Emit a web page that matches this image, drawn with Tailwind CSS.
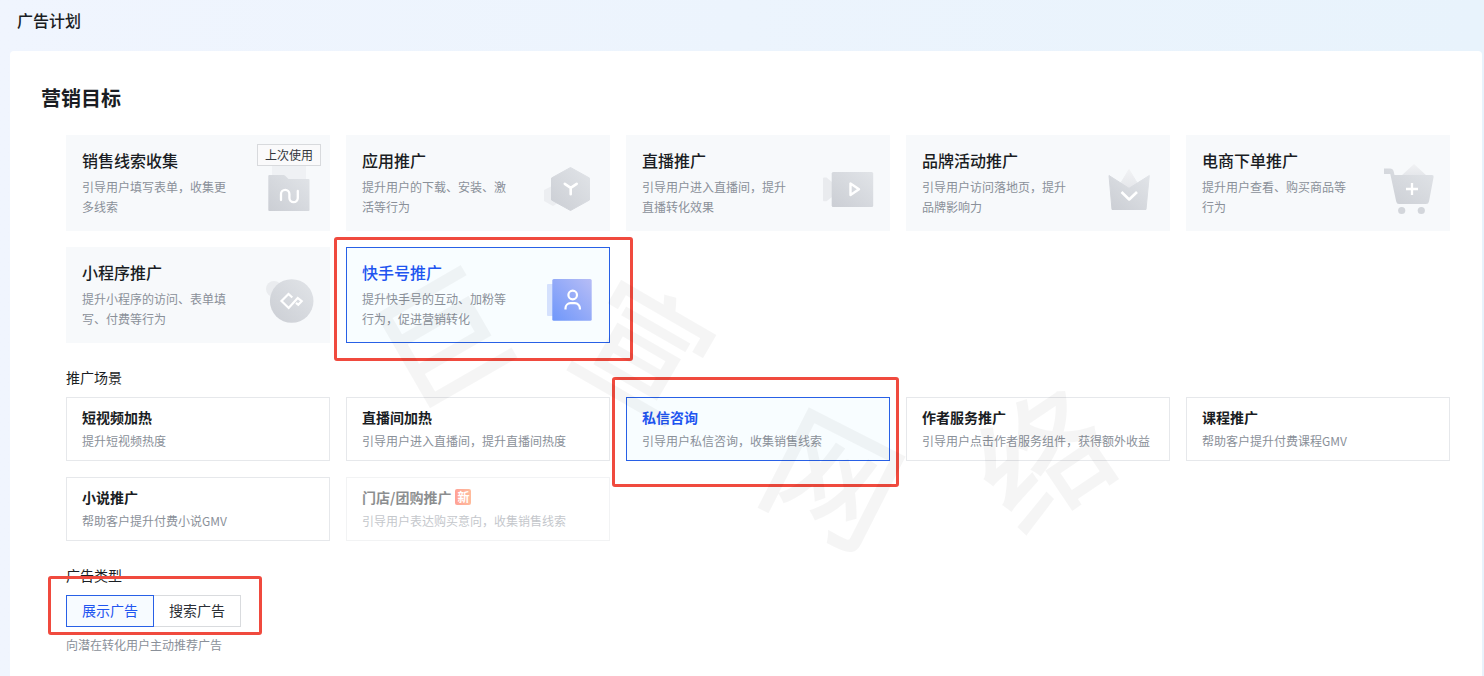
<!DOCTYPE html>
<html lang="zh-CN">
<head>
<meta charset="utf-8">
<meta name="viewport" content="width=device-width, initial-scale=1">
<title>广告计划</title>
<script src="https://cdn.jsdelivr.net/npm/@tailwindcss/browser@4"></script>
</head>
<body class="min-h-screen flex flex-col bg-linear-to-r from-[#f0f5fe] to-[#e8f3fc] font-['Noto_Sans_CJK_SC',sans-serif] text-[#1a1d23]">
<svg class="absolute size-0" aria-hidden="true">
  <defs>
    <linearGradient id="gray" x1="1" y1="0" x2="0" y2="1"><stop offset="0" stop-color="#e1e4e8"/><stop offset="1" stop-color="#cbced4"/></linearGradient>
    <linearGradient id="pale" x1="0" y1="0" x2="0" y2="1"><stop offset="0" stop-color="#f1f2f4"/><stop offset="1" stop-color="#e4e6ea"/></linearGradient>
    <linearGradient id="blue" x1="1" y1="0" x2="0" y2="1"><stop offset="0" stop-color="#b7bdf6"/><stop offset="1" stop-color="#6f97fa"/></linearGradient>
  </defs>
</svg>

<header class="h-[51px] flex items-center px-[17px] pb-3">
  <h1 class="text-base leading-6 font-medium">广告计划</h1>
</header>

<main class="relative flex-1 ml-2.5 mr-0.5 rounded-t bg-white pt-8 pr-8 pl-14 pb-5 overflow-hidden">
  <h2 class="-ml-[25px] text-xl leading-[30px] font-bold">营销目标</h2>

  <section aria-label="营销目标" class="mt-[22px] grid grid-cols-5 gap-4">
    <button type="button" class="relative flex justify-between items-start border border-[#f7f9fb] bg-[#f7f9fb] px-[15px] py-[13px] text-left">
      <span class="w-[148px]">
        <span class="block text-base leading-[22px] font-medium">销售线索收集</span>
        <span class="block mt-1.5 text-xs leading-5 text-[#8a9099]">引导用户填写表单，收集更多线索</span>
      </span>
      <svg class="mt-4 size-[50px] shrink-0 overflow-visible" viewBox="0 0 50 50" fill="none">
        <path d="M8 1h34v14H8z" fill="#eff1f4"/>
        <path d="M5.300 10H19.500q1 0 1.700.7L24.500 14H44.500q1 0 1 1V45q0 1-1 1H5.300q-1 0-1-1V11q0-1 1-1z" fill="url(#gray)"/>
        <path d="M17 35v-6a4.200 4.200 0 0 1 8.400 0v4a4.200 4.200 0 0 0 8.400 0v-7" stroke="#fff" stroke-width="2.300" stroke-linecap="round"/>
      </svg>
      <span class="absolute top-2 right-2 border border-[#d8dadd] bg-[#fafafb] px-[7px] text-xs leading-5 text-[#33373d]">上次使用</span>
    </button>

    <button type="button" class="flex justify-between items-start border border-[#f7f9fb] bg-[#f7f9fb] px-[15px] py-[13px] text-left">
      <span class="w-[148px]">
        <span class="block text-base leading-[22px] font-medium">应用推广</span>
        <span class="block mt-1.5 text-xs leading-5 text-[#8a9099]">提升用户的下载、安装、激活等行为</span>
      </span>
      <svg class="mt-4 size-[50px] shrink-0 overflow-visible" viewBox="0 0 50 50" fill="none" stroke-linejoin="round">
        <path d="M0 25l8-4 9 4v11l-8 5-9-5z" fill="#eceef1"/>
        <path d="M26.500 2.500L45.500 13v22L26.500 45.500 7.500 35V13z" fill="url(#gray)" stroke="url(#gray)"/>
        <path d="M20.800 18.800l5.900 4 6-4M26.700 22.800v6.500" stroke="#fff" stroke-width="2.600" stroke-linecap="round"/>
      </svg>
    </button>

    <button type="button" class="flex justify-between items-start border border-[#f7f9fb] bg-[#f7f9fb] px-[15px] py-[13px] text-left">
      <span class="w-[148px]">
        <span class="block text-base leading-[22px] font-medium">直播推广</span>
        <span class="block mt-1.5 text-xs leading-5 text-[#8a9099]">引导用户进入直播间，提升直播转化效果</span>
      </span>
      <svg class="mt-4 size-[50px] shrink-0 overflow-visible" viewBox="0 0 50 50" fill="none">
        <path d="M0 12.500h2.500L8 17v15l-5.500 4.300H0q-1 0-1-1V13.500q0-1 1-1z" fill="#e9ebee"/>
        <rect x="7.700" y="7" width="41.500" height="35" rx="1.500" fill="url(#gray)"/>
        <path d="M26.500 18.500v11.500l8.500-5.800z" stroke="#fff" stroke-width="2.400" stroke-linejoin="round"/>
      </svg>
    </button>

    <button type="button" class="flex justify-between items-start border border-[#f7f9fb] bg-[#f7f9fb] px-[15px] py-[13px] text-left">
      <span class="w-[148px]">
        <span class="block text-base leading-[22px] font-medium">品牌活动推广</span>
        <span class="block mt-1.5 text-xs leading-5 text-[#8a9099]">引导用户访问落地页，提升品牌影响力</span>
      </span>
      <svg class="mt-4 size-[50px] shrink-0 overflow-visible" viewBox="0 0 50 50" fill="none" stroke-linejoin="round">
        <path d="M25 4.500l8.500 14-8.500 6-8.500-6z" fill="url(#pale)" stroke="url(#pale)"/>
        <path d="M5 10.500l20 12.800 20.300-12.800L42 44.500H8z" fill="url(#gray)" stroke="url(#gray)"/>
        <path d="M17.500 27l7.700 7.500L33 27" stroke="#fff" stroke-width="2.600"/>
      </svg>
    </button>

    <button type="button" class="flex justify-between items-start border border-[#f7f9fb] bg-[#f7f9fb] px-[15px] py-[13px] text-left">
      <span class="w-[148px]">
        <span class="block text-base leading-[22px] font-medium">电商下单推广</span>
        <span class="block mt-1.5 text-xs leading-5 text-[#8a9099]">提升用户查看、购买商品等行为</span>
      </span>
      <svg class="mt-4 size-[50px] shrink-0 overflow-visible" viewBox="0 0 50 50" fill="none">
        <path d="M30-1l13 12H17z" fill="url(#pale)"/>
        <path d="M0 3.500h6q3 0 3.700 3l.8 3.500H48q2 0 1.600 2L45 36.500q-.5 2.500-3 2.500H15q-2.300 0-2.800-2.500L6.300 9H0z" fill="url(#gray)"/>
        <circle cx="17.700" cy="45.500" r="3.600" fill="#d3d6db"/>
        <circle cx="37.300" cy="45.500" r="3.600" fill="#d3d6db"/>
        <path d="M22 24h12M28 18v12" stroke="#fff" stroke-width="2.300"/>
      </svg>
    </button>

    <button type="button" class="flex justify-between items-start border border-[#f7f9fb] bg-[#f7f9fb] px-[15px] py-[13px] text-left">
      <span class="w-[148px]">
        <span class="block text-base leading-[22px] font-medium">小程序推广</span>
        <span class="block mt-1.5 text-xs leading-5 text-[#8a9099]">提升小程序的访问、表单填写、付费等行为</span>
      </span>
      <svg class="mt-4 size-[50px] shrink-0 overflow-visible" viewBox="0 0 50 50" fill="none">
        <circle cx="10" cy="12" r="8" fill="#eaecef"/>
        <circle cx="27.700" cy="24" r="21.800" fill="url(#gray)"/>
        <path d="M28.300 20.500l-3.800-3.500-7 7 7.200 7 9-10 4 3.200-3.400 3.600-2.300-2" stroke="#fff" stroke-width="2.200"/>
      </svg>
    </button>

    <button type="button" aria-pressed="true" class="relative flex justify-between items-start border border-[#2860e6] bg-[#f8fdff] px-[15px] py-[13px] text-left">
      <span class="w-[148px]">
        <span class="block text-base leading-[22px] font-medium text-[#1f55f0]">快手号推广</span>
        <span class="block mt-1.5 text-xs leading-5 text-[#8a9099]">提升快手号的互动、加粉等行为，促进营销转化</span>
      </span>
      <svg class="mt-4 size-[50px] shrink-0 overflow-visible" viewBox="0 0 50 50" fill="none">
        <rect x="3" y="7" width="12" height="32" rx="1" fill="#d5e1fd"/>
        <rect x="8.300" y="2" width="39.400" height="41.700" rx="1.500" fill="url(#blue)"/>
        <circle cx="28.700" cy="18" r="4.300" stroke="#fff" stroke-width="2.200"/>
        <path d="M21.500 32.500v-1.300a5 5 0 0 1 5-5h4.400a5 5 0 0 1 5 5v1.300" stroke="#fff" stroke-width="2.200"/>
      </svg>
      <span class="absolute -top-[11px] -bottom-[19px] -left-[13px] -right-6 rounded-[3px] border-3 border-[#f04a3e]"></span>
    </button>
  </section>

  <h3 class="mt-[23px] text-sm leading-[22px]">推广场景</h3>
  <section aria-label="推广场景" class="mt-[9px] grid grid-cols-5 gap-4">
    <button type="button" class="border border-[#e6e8eb] px-[15px] pt-[9px] pb-2.5 text-left">
      <span class="block text-sm leading-5 font-bold">短视频加热</span>
      <span class="block mt-[5px] text-xs leading-[18px] text-[#8a9099]">提升短视频热度</span>
    </button>
    <button type="button" class="border border-[#e6e8eb] px-[15px] pt-[9px] pb-2.5 text-left">
      <span class="block text-sm leading-5 font-bold">直播间加热</span>
      <span class="block mt-[5px] text-xs leading-[18px] text-[#8a9099]">引导用户进入直播间，提升直播间热度</span>
    </button>
    <button type="button" aria-pressed="true" class="relative border border-[#2860e6] bg-[#f8fdff] px-[15px] pt-[9px] pb-2.5 text-left">
      <span class="block text-sm leading-5 font-bold text-[#1f55f0]">私信咨询</span>
      <span class="block mt-[5px] text-xs leading-[18px] text-[#8a9099]">引导用户私信咨询，收集销售线索</span>
      <span class="absolute -top-[21px] -bottom-[27px] -left-[15px] -right-2.5 rounded-[3px] border-3 border-[#f04a3e]"></span>
    </button>
    <button type="button" class="border border-[#e6e8eb] px-[15px] pt-[9px] pb-2.5 text-left">
      <span class="block text-sm leading-5 font-bold">作者服务推广</span>
      <span class="block mt-[5px] text-xs leading-[18px] text-[#8a9099]">引导用户点击作者服务组件，获得额外收益</span>
    </button>
    <button type="button" class="border border-[#e6e8eb] px-[15px] pt-[9px] pb-2.5 text-left">
      <span class="block text-sm leading-5 font-bold">课程推广</span>
      <span class="block mt-[5px] text-xs leading-[18px] text-[#8a9099]">帮助客户提升付费课程GMV</span>
    </button>
    <button type="button" class="border border-[#e6e8eb] px-[15px] pt-[9px] pb-2.5 text-left">
      <span class="block text-sm leading-5 font-bold">小说推广</span>
      <span class="block mt-[5px] text-xs leading-[18px] text-[#8a9099]">帮助客户提升付费小说GMV</span>
    </button>
    <button type="button" disabled class="border border-[#e6e8eb] px-[15px] pt-[9px] pb-2.5 text-left opacity-50">
      <span class="flex items-center gap-1 text-sm leading-5 font-bold">门店/团购推广
        <span class="size-4 rounded-xs bg-linear-to-r from-[#ff4630] to-[#ff7a3c] text-center text-xs leading-4 font-bold text-white">新</span>
      </span>
      <span class="block mt-[5px] text-xs leading-[18px] text-[#8a9099]">引导用户表达购买意向，收集销售线索</span>
    </button>
  </section>

  <h3 class="mt-[23px] text-sm leading-[22px]">广告类型</h3>
  <div role="group" aria-label="广告类型" class="relative mt-[9px] flex w-fit">
    <button type="button" aria-pressed="true" class="h-8 w-22 border border-[#2860e6] bg-[#f7fbff] pb-0.5 text-sm text-[#1f55f0]">展示广告</button>
    <button type="button" class="h-8 w-[87px] border border-l-0 border-[#d9dbde] pb-0.5 text-sm text-[#2b2f36]">搜索广告</button>
    <span class="pointer-events-none absolute -top-[19px] -bottom-2 -left-[18px] -right-[21px] rounded-[3px] border-3 border-[#f04a3e]"></span>
  </div>
  <p class="mt-2 text-xs leading-5 text-[#8a9099]">向潜在转化用户主动推荐广告</p>

  <svg class="pointer-events-none absolute top-0 left-0 w-[1472px] h-[625px] font-medium" viewBox="0 0 1472 625" aria-hidden="true" font-size="130" fill="#000" fill-opacity=".04" text-anchor="middle">
    <text transform="translate(432 287) rotate(-30)" y="49">巨</text>
    <text transform="translate(634 299) rotate(30)" y="49">宣</text>
    <text transform="translate(823 428) rotate(27)" y="49">网</text>
    <text transform="translate(1034 408) rotate(-34)" y="49">络</text>
  </svg>
</main>
</body>
</html>
